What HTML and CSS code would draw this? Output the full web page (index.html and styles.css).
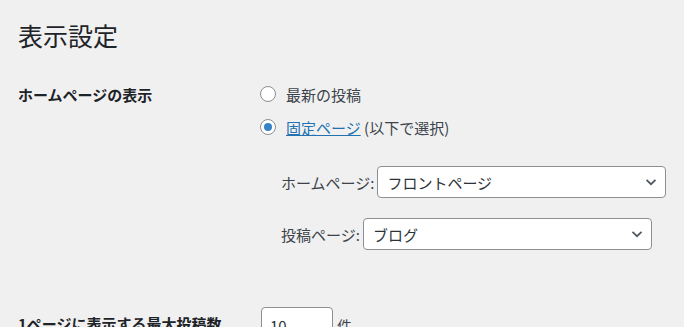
FILE: index.html
```html
<!DOCTYPE html>
<html lang="ja">
<head>
  <meta charset="UTF-8">
  <title>表示設定</title>
  <link rel="stylesheet" href="styles.css">
</head>
<body>
  <div class="wrap">
    <h1>表示設定</h1>

    <div class="form-row">
      <div class="th">ホームページの表示</div>
      <div class="td">
        <label class="radio-line">
          <span class="radio"></span>
          <span>最新の投稿</span>
        </label>
        <label class="radio-line">
          <span class="radio checked"></span>
          <span><a href="#">固定ページ</a> (以下で選択)</span>
        </label>

        <div class="page-selects">
          <div class="select-row">
            <span class="select-label">ホームページ:</span>
            <div class="select">
              <span>フロントページ</span>
              <svg class="chevron" width="12" height="8" viewBox="0 0 12 8"><path d="M1.5 1.8 L6 6.2 L10.5 1.8" fill="none" stroke="#50575e" stroke-width="1.7"/></svg>
            </div>
          </div>
          <div class="select-row">
            <span class="select-label">投稿ページ:</span>
            <div class="select">
              <span>ブログ</span>
              <svg class="chevron" width="12" height="8" viewBox="0 0 12 8"><path d="M1.5 1.8 L6 6.2 L10.5 1.8" fill="none" stroke="#50575e" stroke-width="1.7"/></svg>
            </div>
          </div>
        </div>
      </div>
    </div>

    <div class="form-row last">
      <div class="th">1ページに表示する最大投稿数</div>
      <div class="td inline">
        <span class="num-input">10</span>
        <span class="unit">件</span>
      </div>
    </div>
  </div>
</body>
</html>
```

FILE: styles.css
```css
body {
  margin: 0;
  background: #f0f0f1;
  color: #3c434a;
  font-family: "Noto Sans CJK JP", "Noto Sans", sans-serif;
  font-size: 15px;
  overflow: hidden;
}
.wrap {
  padding: 0 18px;
}
h1 {
  font-size: 25px;
  font-weight: 400;
  color: #1d2327;
  line-height: 30px;
  margin: 0;
  padding-top: 20px;
}
.form-row {
  display: flex;
  margin-top: 32px;
}
.form-row.last {
  margin-top: 57px;
}
.th {
  width: 242px;
  flex-shrink: 0;
  font-weight: 700;
  color: #1d2327;
  line-height: 24px;
  padding-top: 1px;
  white-space: nowrap;
}
.form-row.last .th {
  padding-top: 5px;
}
.td {
  flex: 1;
}
.radio-line {
  display: flex;
  align-items: center;
  height: 24px;
  gap: 10px;
  margin-bottom: 9px;
}
.radio-line:nth-of-type(2) {
  margin-bottom: 0;
}
.radio {
  box-sizing: border-box;
  width: 16px;
  height: 16px;
  border: 1px solid #8c8f94;
  border-radius: 50%;
  background: #fff;
  display: flex;
  align-items: center;
  justify-content: center;
}
.radio.checked::after {
  content: "";
  width: 8px;
  height: 8px;
  border-radius: 50%;
  background: #3582c4;
}
a {
  color: #2271b1;
  text-decoration: underline;
}
.page-selects {
  padding-left: 21px;
  margin-top: 27px;
  display: flex;
  flex-direction: column;
  gap: 20px;
}
.select-row {
  display: flex;
  align-items: center;
  gap: 3px;
  white-space: nowrap;
}
.select {
  box-sizing: border-box;
  flex-shrink: 0;
  width: 289px;
  height: 32px;
  border: 1px solid #8c8f94;
  border-radius: 4px;
  background: #fff;
  color: #2c3338;
  display: flex;
  align-items: center;
  justify-content: space-between;
  padding: 0 8px 0 9px;
}
.chevron {
  display: block;
}
.td.inline {
  display: flex;
  align-items: flex-start;
  gap: 4px;
}
.num-input {
  box-sizing: border-box;
  width: 72px;
  height: 30px;
  border: 1px solid #8c8f94;
  border-radius: 4px;
  background: #fff;
  color: #2c3338;
  padding: 4px 8px 0;
  line-height: 28px;
  margin-left: 1px;
}
.unit {
  line-height: 28px;
  margin-top: 5px;
}
```
